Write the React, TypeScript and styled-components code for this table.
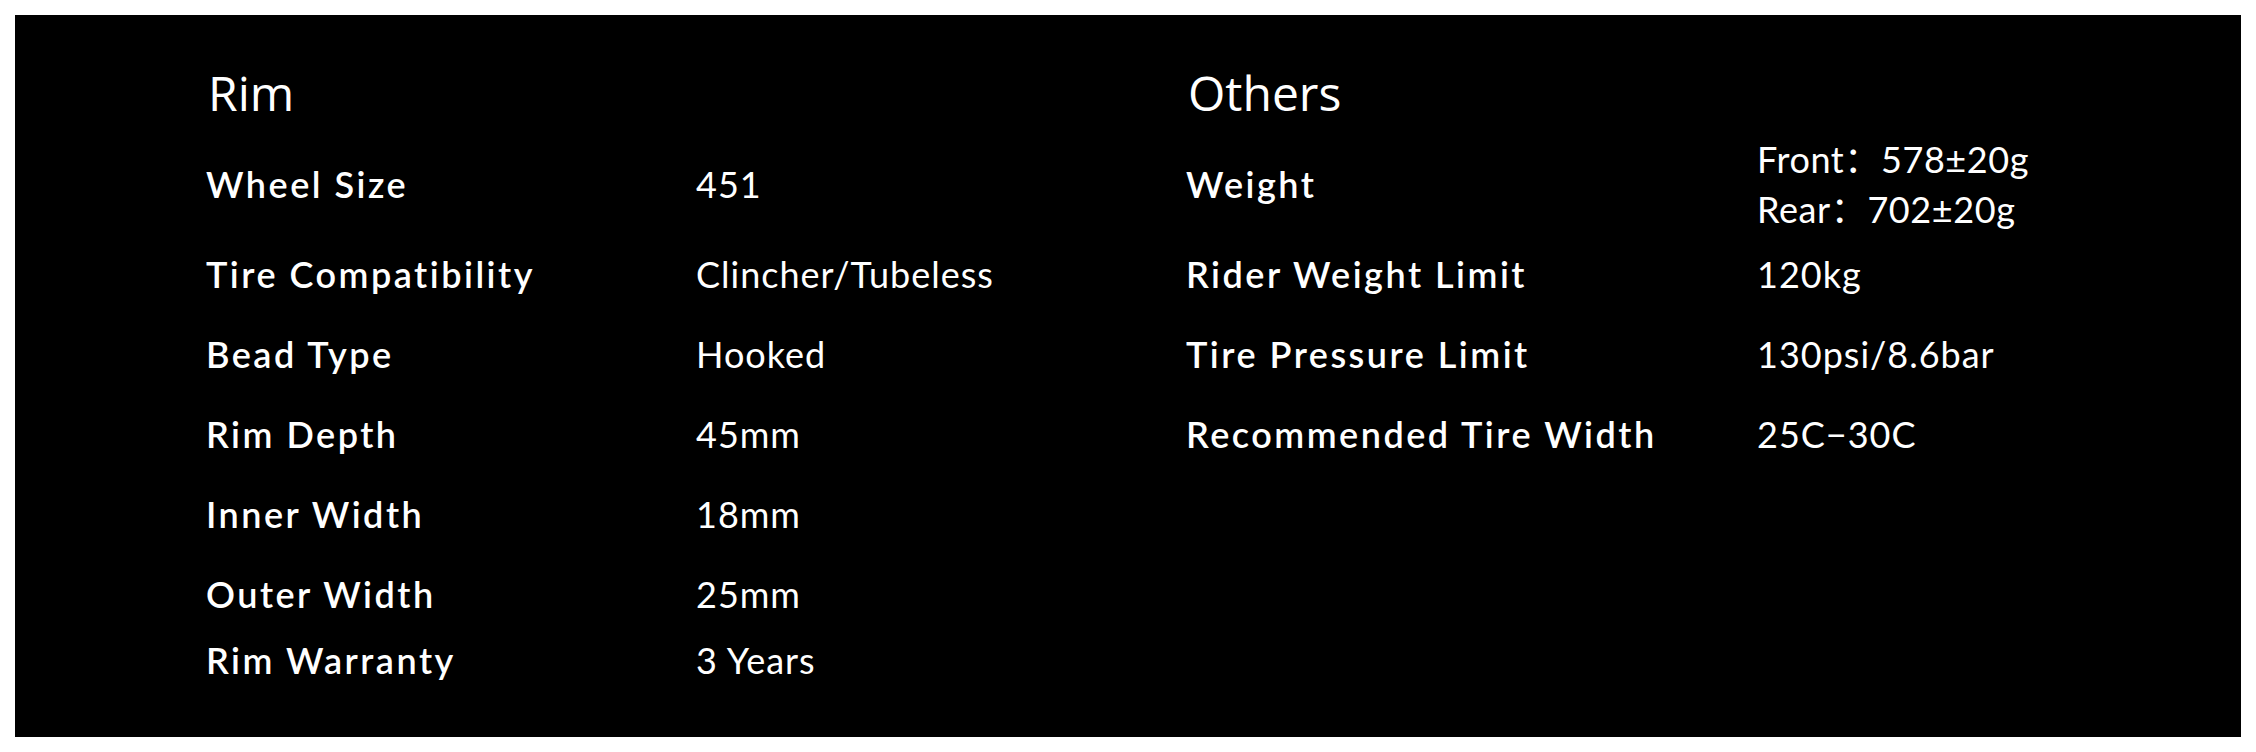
import React from "react";
import styled, { createGlobalStyle } from "styled-components";

const Global = createGlobalStyle`
  html, body { margin: 0; padding: 0; background: #ffffff; }
  body { padding: 15px; }
`;

const Panel = styled.section`
  background: #000000;
  color: #ffffff;
  height: 722px;
  box-sizing: border-box;
  padding: 48px 0 0 191px;
  font-family: "Lato", "Noto Sans CJK SC", sans-serif;
`;

const Row = styled.div<{ $h?: number }>`
  display: grid;
  grid-template-columns: 490px 490px 571px 1fr;
  align-items: center;
  height: ${(p) => (p.$h ? `${p.$h}px` : "auto")};
`;

const Heading = styled.h2`
  margin: 0;
  font-family: "Open Sans", sans-serif;
  font-weight: 400;
  font-size: 48px;
  line-height: 60px;
  padding-left: 2px;
`;

const HeadRow = styled(Row)`
  margin-bottom: 11px;
`;

const Label = styled.div`
  font-weight: 600;
  font-size: 36px;
  letter-spacing: 2.5px;
  line-height: 44px;
  white-space: nowrap;
`;

const Value = styled.div`
  font-weight: 400;
  font-size: 36px;
  letter-spacing: 1px;
  line-height: 44px;
  white-space: nowrap;
`;

const MultiValue = styled(Value)`
  line-height: 50px;
  letter-spacing: 0.6px;
`;

const Empty = styled.div``;

type Spec = { label: string; value: React.ReactNode };

const rows: { left?: Spec; right?: Spec; h: number }[] = [
  {
    h: 100,
    left: { label: "Wheel Size", value: "451" },
    right: {
      label: "Weight",
      value: (
        <MultiValue>
          Front：578±20g
          <br />
          Rear：702±20g
        </MultiValue>
      ),
    },
  },
  {
    h: 80,
    left: { label: "Tire Compatibility", value: "Clincher/Tubeless" },
    right: { label: "Rider Weight Limit", value: "120kg" },
  },
  {
    h: 80,
    left: { label: "Bead Type", value: "Hooked" },
    right: { label: "Tire Pressure Limit", value: "130psi/8.6bar" },
  },
  {
    h: 80,
    left: { label: "Rim Depth", value: "45mm" },
    right: { label: "Recommended Tire Width", value: "25C−30C" },
  },
  { h: 80, left: { label: "Inner Width", value: "18mm" } },
  { h: 80, left: { label: "Outer Width", value: "25mm" } },
  { h: 52, left: { label: "Rim Warranty", value: "3 Years" } },
];

const renderValue = (v: React.ReactNode) =>
  typeof v === "string" ? <Value>{v}</Value> : v;

export default function App() {
  return (
    <>
      <Global />
      <Panel>
        <HeadRow>
          <Heading>Rim</Heading>
          <Empty />
          <Heading>Others</Heading>
          <Empty />
        </HeadRow>
        {rows.map((r, i) => (
          <Row key={i} $h={r.h}>
            {r.left ? <Label>{r.left.label}</Label> : <Empty />}
            {r.left ? renderValue(r.left.value) : <Empty />}
            {r.right ? <Label>{r.right.label}</Label> : <Empty />}
            {r.right ? renderValue(r.right.value) : <Empty />}
          </Row>
        ))}
      </Panel>
    </>
  );
}
